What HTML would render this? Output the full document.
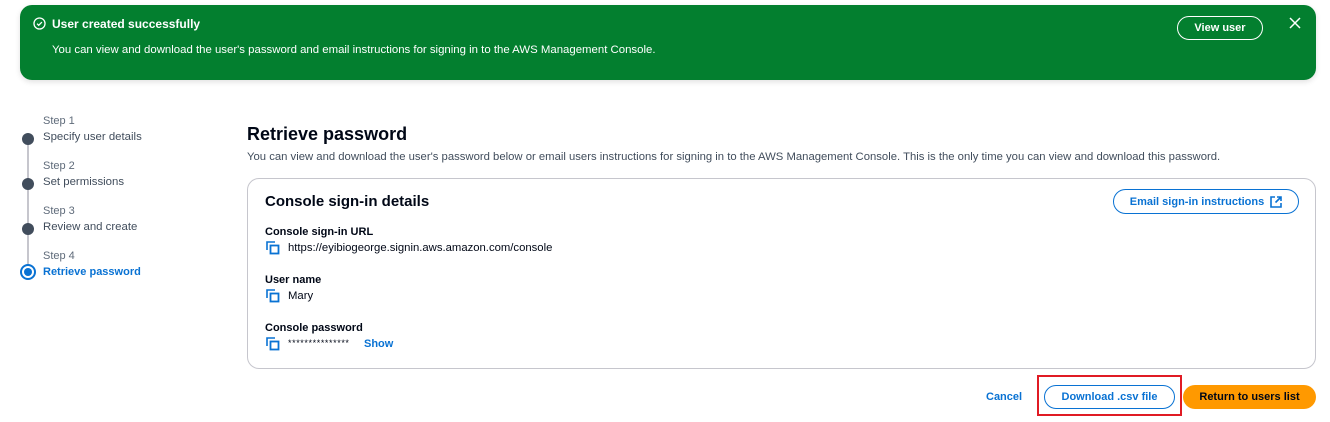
<!DOCTYPE html>
<html><head><meta charset="utf-8"><style>
*{box-sizing:border-box;margin:0;padding:0}
body{width:1330px;height:422px;background:#fff;font-family:"Liberation Sans",Arial,sans-serif;color:#000716;position:relative;overflow:hidden}
.abs{position:absolute}
.banner{left:20px;top:5px;width:1296px;height:75px;background:#037f2f;border-radius:12px;box-shadow:0 2px 6px rgba(0,0,0,.12);color:#fff}
.b{font-weight:bold}
.step{font-size:11px;color:#5f6b7a}
.stitle{font-size:11.4px;color:#414d5c}
.dot{width:12px;height:12px;border-radius:50%;background:#414d5c}
.copy{width:14px;height:14px}
.btn{border:1.5px solid #0972d3;border-radius:20px;color:#0972d3;font-weight:bold;font-size:11px;display:flex;align-items:center;justify-content:center}
</style></head><body>
<div class="abs banner">
  <svg class="abs" style="left:13px;top:12px" width="13" height="13" viewBox="0 0 16 16"><circle cx="8" cy="8" r="6.8" fill="none" stroke="#fff" stroke-width="1.6"/><path d="M5 8.2l2 2 4-4" fill="none" stroke="#fff" stroke-width="1.6"/></svg>
  <div class="abs b" style="left:32px;top:12px;font-size:12px">User created successfully</div>
  <div class="abs" style="left:32px;top:39px;font-size:11.4px">You can view and download the user's password and email instructions for signing in to the AWS Management Console.</div>
  <div class="abs b" style="left:1157px;top:11px;width:86px;height:24px;border:1.3px solid #fff;border-radius:14px;font-size:11px;display:flex;align-items:center;justify-content:center">View user</div>
  <svg class="abs" style="left:1269px;top:12px" width="12" height="12" viewBox="0 0 12 12"><path d="M1 1l10 10M11 1L1 11" stroke="#fff" stroke-width="1.5"/></svg>
</div>

<div class="abs" style="left:27px;top:139px;width:2px;height:129px;background:#c6c6cd"></div>
<div class="abs step" style="left:43px;top:115px">Step 1</div>
<div class="abs stitle" style="left:43px;top:131px">Specify user details</div>
<div class="abs dot" style="left:22px;top:133px"></div>
<div class="abs step" style="left:43px;top:160px">Step 2</div>
<div class="abs stitle" style="left:43px;top:176px">Set permissions</div>
<div class="abs dot" style="left:22px;top:178px"></div>
<div class="abs step" style="left:43px;top:205px">Step 3</div>
<div class="abs stitle" style="left:43px;top:221px">Review and create</div>
<div class="abs dot" style="left:22px;top:223px"></div>
<div class="abs step" style="left:43px;top:250px">Step 4</div>
<div class="abs stitle b" style="left:43px;top:266px;color:#0972d3;font-size:11px">Retrieve password</div>
<div class="abs" style="left:20px;top:264px;width:16px;height:16px;border-radius:50%;border:2px solid #0972d3;background:#fff"><div style="margin:2px;width:8px;height:8px;border-radius:50%;background:#0972d3"></div></div>

<div class="abs b" style="left:247px;top:124px;font-size:18px">Retrieve password</div>
<div class="abs" style="left:247px;top:151px;font-size:11.3px;color:#414d5c">You can view and download the user's password below or email users instructions for signing in to the AWS Management Console. This is the only time you can view and download this password.</div>

<div class="abs" style="left:247px;top:178px;width:1069px;height:191px;border:1px solid #c6c6cd;border-radius:12px"></div>
<div class="abs b" style="left:265px;top:193px;font-size:15px">Console sign-in details</div>
<div class="abs btn" style="left:1113px;top:189px;width:186px;height:25px">Email sign-in instructions <svg style="margin-left:6px" width="12" height="12" viewBox="0 0 12 12"><path d="M5 1H1v10h10V7M7 1h4v4M11 1L5.5 6.5" fill="none" stroke="#0972d3" stroke-width="1.6"/></svg></div>

<div class="abs b" style="left:265px;top:226px;font-size:11px">Console sign-in URL</div>
<div class="abs" style="left:288px;top:242px;font-size:11.3px">https://eyibiogeorge.signin.aws.amazon.com/console</div>
<div class="abs b" style="left:265px;top:274px;font-size:11px">User name</div>
<div class="abs" style="left:288px;top:290px;font-size:11.3px">Mary</div>
<div class="abs b" style="left:265px;top:322px;font-size:11px">Console password</div>
<div class="abs" style="left:288px;top:338px;font-size:9px;letter-spacing:0.6px">***************</div>
<div class="abs b" style="left:364px;top:338px;font-size:11px;color:#0972d3">Show</div>
<svg class="abs copy" style="left:266px;top:241px" viewBox="0 0 14 14"><path d="M1 9V1h8" fill="none" stroke="#0972d3" stroke-width="1.6"/><rect x="4.5" y="4.5" width="8" height="8" fill="none" stroke="#0972d3" stroke-width="1.8"/></svg>
<svg class="abs copy" style="left:266px;top:289px" viewBox="0 0 14 14"><path d="M1 9V1h8" fill="none" stroke="#0972d3" stroke-width="1.6"/><rect x="4.5" y="4.5" width="8" height="8" fill="none" stroke="#0972d3" stroke-width="1.8"/></svg>
<svg class="abs copy" style="left:266px;top:337px" viewBox="0 0 14 14"><path d="M1 9V1h8" fill="none" stroke="#0972d3" stroke-width="1.6"/><rect x="4.5" y="4.5" width="8" height="8" fill="none" stroke="#0972d3" stroke-width="1.8"/></svg>

<div class="abs b" style="left:986px;top:391px;font-size:11px;color:#0972d3">Cancel</div>
<div class="abs" style="left:1037px;top:375px;width:145px;height:41px;border:2px solid #e01b24"></div>
<div class="abs btn" style="left:1044px;top:385px;width:131px;height:24px">Download .csv file</div>
<div class="abs b" style="left:1183px;top:385px;width:133px;height:24px;border-radius:14px;background:#ff9900;font-size:11px;display:flex;align-items:center;justify-content:center">Return to users list</div>
</body></html>
